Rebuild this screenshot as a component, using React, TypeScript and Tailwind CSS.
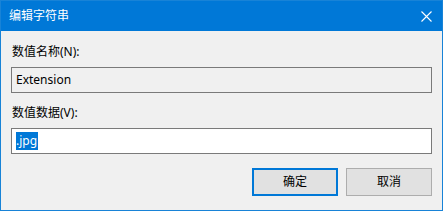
import React from 'react';

const font = { fontFamily: '"Noto Sans", "Noto Sans CJK SC", sans-serif' };

export default function App() {
    return (
        <div
            className="w-[443px] h-[211px] border border-[#1883d7] bg-[#f0f0f0] flex flex-col text-[12px] text-black"
            style={font}
        >
            {/* Title bar */}
            <div className="h-[30px] bg-[#0078d7] flex items-center justify-between pl-[8px] pr-[10px] text-white">
                <span className="leading-none">编辑字符串</span>
                <svg width="11" height="11" viewBox="0 0 11 11">
                    <path d="M0.5 0.5 L10.5 10.5 M10.5 0.5 L0.5 10.5" stroke="white" strokeWidth="1.1" />
                </svg>
            </div>

            {/* Body */}
            <div className="flex flex-col px-[10px] pt-[13px]">
                <div className="h-[16px] leading-[16px] pl-[1px]">数值名称(N):</div>
                <div className="mt-[7px] h-[26px] border border-[#7a7a7a] bg-[#f0f0f0] flex items-center pl-[4px]">
                    Extension
                </div>
                <div className="mt-[12px] h-[16px] leading-[16px] pl-[1px]">数值数据(V):</div>
                <div className="mt-[7px] h-[26px] border border-[#7a7a7a] bg-white flex items-center pl-[4px]">
                    <span className="bg-[#0078d7] text-white h-[18px] leading-[18px] pr-[1px]">.jpg</span>
                </div>
                <div className="mt-[14px] flex justify-end gap-[8px]">
                    <button className="w-[86px] h-[28px] border-2 border-[#0078d7] bg-[#e1e1e1]">确定</button>
                    <button className="w-[86px] h-[28px] border border-[#adadad] bg-[#e1e1e1]">取消</button>
                </div>
            </div>
        </div>
    );
}
